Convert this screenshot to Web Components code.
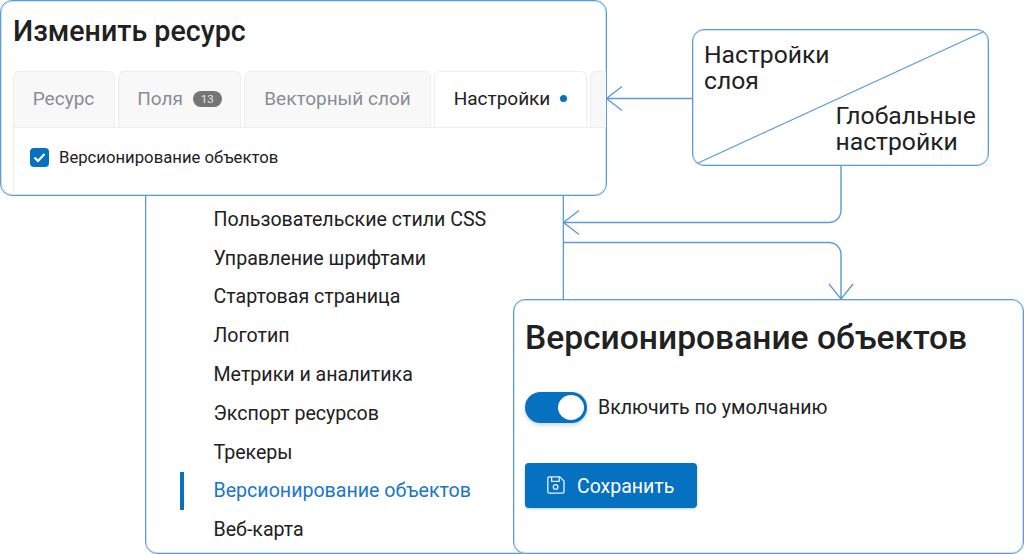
<!DOCTYPE html>
<html lang="ru">
<head>
<meta charset="utf-8">
<title>Версионирование объектов</title>
<style>
html, body { margin: 0; background: #fff; }
body { font-family: Roboto, "Liberation Sans", sans-serif; color: #212121; }
</style>
</head>
<body>
<settings-diagram>
  <nav-window style="left:145px;top:150px;width:419px;height:404px">
    <nav-item>Пользовательские стили CSS</nav-item>
    <nav-item>Управление шрифтами</nav-item>
    <nav-item>Стартовая страница</nav-item>
    <nav-item>Логотип</nav-item>
    <nav-item>Метрики и аналитика</nav-item>
    <nav-item>Экспорт ресурсов</nav-item>
    <nav-item>Трекеры</nav-item>
    <nav-item active>Версионирование объектов</nav-item>
    <nav-item>Веб-карта</nav-item>
  </nav-window>
  <diagram-links></diagram-links>
  <scope-box style="left:692px;top:29px;width:297px;height:137px"></scope-box>
  <resource-card style="left:0;top:0;width:607px;height:196px"></resource-card>
  <versioning-card style="left:513px;top:299px;width:511px;height:255px"></versioning-card>
</settings-diagram>

<script>
const LINE = "#5b9bd8";
const HALO = "inset 0 0 0 1px rgba(91,155,216,.3)";
const BLUE = "#0670c1";

class SettingsDiagram extends HTMLElement {
  constructor() {
    super();
    this.attachShadow({ mode: "open" });
    this.shadowRoot.innerHTML = `
<style>
:host { display: block; position: relative; width: 1024px; height: 554px; overflow: hidden; }
</style>
<slot></slot>`;
  }
}

class NavWindow extends HTMLElement {
  constructor() {
    super();
    this.attachShadow({ mode: "open" });
    this.shadowRoot.innerHTML = `
<style>
:host {
  display: flex; flex-direction: column; position: absolute; box-sizing: border-box;
  padding-top: 49px; background: #fff;
  border: 1px solid ${LINE}; border-radius: 12px; box-shadow: ${HALO};
}
</style>
<slot></slot>`;
  }
}

class NavItem extends HTMLElement {
  constructor() {
    super();
    this.attachShadow({ mode: "open" });
    this.shadowRoot.innerHTML = `
<style>
:host {
  display: flex; align-items: center; height: 38.8px; flex: none;
  margin-left: 34px; padding-left: 29.5px;
  border-left: 4px solid transparent;
  font-size: 19.6px; color: #212121;
}
:host([active]) { border-left-color: ${BLUE}; color: #1976c9; }
</style>
<slot></slot>`;
  }
}

class DiagramLinks extends HTMLElement {
  constructor() {
    super();
    this.attachShadow({ mode: "open" });
    this.shadowRoot.innerHTML = `
<style>
:host { position: absolute; left: 0; top: 0; }
svg { display: block; }
path { fill: none; stroke: ${LINE}; stroke-width: 1.4; }
</style>
<svg width="1024" height="554" viewBox="0 0 1024 554">
  <path d="M692.5 98.5H606.5M622 86.5L606.5 98.5L622 110.5"/>
  <path d="M841 165V210.5a12 12 0 0 1 -12 12H563.5M579 210.5L563.5 222.5L579 234.5"/>
  <path d="M563.5 242.5H829a12 12 0 0 1 12 12V299M829 284L841 299L853 284"/>
</svg>`;
  }
}

class ScopeBox extends HTMLElement {
  constructor() {
    super();
    this.attachShadow({ mode: "open" });
    this.shadowRoot.innerHTML = `
<style>
:host {
  display: flex; flex-direction: column; justify-content: space-between; position: absolute;
  box-sizing: border-box; padding: 12px 11px 10px 11px; background: #fff;
  border: 1px solid ${LINE}; border-radius: 12px; box-shadow: ${HALO};
  font-size: 24.7px; line-height: 26px; color: #212121;
}
svg { position: absolute; left: 0; top: 0; }
line { stroke: ${LINE}; stroke-width: 1.2; }
.right { align-self: flex-start; margin-left: 131.5px; }
</style>
<svg width="295" height="135" viewBox="0 0 295 135"><line x1="4" y1="133.5" x2="291" y2="1.5"/></svg>
<div>Настройки<br>слоя</div>
<div class="right">Глобальные<br>настройки</div>`;
  }
}

class TabItem extends HTMLElement {
  constructor() {
    super();
    this.attachShadow({ mode: "open" });
    this.shadowRoot.innerHTML = `
<style>
:host {
  display: flex; align-items: center; justify-content: center; gap: 10px; box-sizing: border-box;
  flex: none; height: 57px; padding-bottom: 2px; margin-bottom: -1px;
  background: #f8f8f8; border: 1px solid #eeeeee; border-radius: 6px 6px 0 0;
  font-size: 19px; color: #868e96;
}
:host([active]) { background: #fff; border-bottom-color: #fff; color: #212121; }
</style>
<slot></slot>`;
  }
}

class ResourceCard extends HTMLElement {
  constructor() {
    super();
    this.attachShadow({ mode: "open" });
    this.shadowRoot.innerHTML = `
<style>
:host {
  display: flex; flex-direction: column; position: absolute; box-sizing: border-box;
  padding-left: 12px; background: #fff; overflow: hidden;
  border: 1px solid ${LINE}; border-radius: 12px; box-shadow: ${HALO};
}
h1 { margin: 14px 0 0 0; height: 56px; font-size: 28.6px; line-height: 32px; font-weight: 500; color: #212121; }
.tabs { display: flex; gap: 3px; flex: none; }
.badge {
  display: inline-block; width: 29px; height: 16px; border-radius: 8px; background: #757575;
  color: #e4e4e4; font-size: 11.5px; line-height: 16px; text-align: center;
}
.dot { width: 7px; height: 7px; border-radius: 50%; background: ${BLUE}; }
.panel {
  flex: 1; display: flex; align-items: center; align-self: stretch; gap: 10px;
  padding: 0 0 9px 16px; border: 1px solid #eeeeee; border-width: 1px 0 0 1px;
}
.check { width: 19px; height: 19px; flex: none; border-radius: 4px; background: ${BLUE}; display: flex; align-items: center; justify-content: center; }
.label { font-size: 16.7px; color: #212121; }
</style>
<h1>Изменить ресурс</h1>
<div class="tabs">
  <tab-item style="width:102px;padding-right:1px">Ресурс</tab-item>
  <tab-item style="width:123px">Поля <span class="badge">13</span></tab-item>
  <tab-item style="width:187px">Векторный слой</tab-item>
  <tab-item active style="width:153px">Настройки <span class="dot"></span></tab-item>
  <tab-item style="width:40px"></tab-item>
</div>
<div class="panel">
  <span class="check"><svg width="13" height="11" viewBox="0 0 13 11"><path d="M1.5 5.5L5 9L11.5 2" fill="none" stroke="#fff" stroke-width="2.2"/></svg></span>
  <span class="label">Версионирование объектов</span>
</div>`;
  }
}

class ToggleSwitch extends HTMLElement {
  constructor() {
    super();
    this.attachShadow({ mode: "open" });
    this.shadowRoot.innerHTML = `
<style>
:host {
  display: flex; justify-content: flex-end; align-items: center; box-sizing: border-box;
  width: 62px; height: 31px; padding: 3px; flex: none;
  border-radius: 16px; background: ${BLUE}; box-shadow: 0 2px 4px rgba(6,112,193,.25);
}
span { width: 26px; height: 25px; border-radius: 50%; background: #fff; }
</style>
<span></span>`;
  }
}

class SaveButton extends HTMLElement {
  constructor() {
    super();
    this.attachShadow({ mode: "open" });
    this.shadowRoot.innerHTML = `
<style>
:host {
  display: inline-flex; align-items: center; gap: 12px; box-sizing: border-box;
  width: 172px; height: 45px; padding: 1px 0 0 22px;
  background: ${BLUE}; border-radius: 4px; box-shadow: 0 1px 3px rgba(6,112,193,.3);
  color: #fff; font-size: 19.5px;
}
svg { flex: none; margin-top: -3px; }
</style>
<svg width="18" height="18" viewBox="0 0 18 18" fill="none" stroke="#e8f1f9" stroke-width="1.3">
  <path d="M2.2 .9h10.6l4.2 4.2v10.6a1.4 1.4 0 0 1-1.4 1.4H2.2a1.4 1.4 0 0 1-1.4-1.4V2.3A1.4 1.4 0 0 1 2.2 .9z"/>
  <path d="M4.6 .9v4.4h7.6V.9"/>
  <circle cx="8.6" cy="11" r="2.3"/>
</svg>
<slot></slot>`;
  }
}

class VersioningCard extends HTMLElement {
  constructor() {
    super();
    this.attachShadow({ mode: "open" });
    this.shadowRoot.innerHTML = `
<style>
:host {
  display: flex; flex-direction: column; align-items: flex-start; position: absolute; box-sizing: border-box;
  padding: 20px 11px 0 11px; background: #fff;
  border: 1px solid ${LINE}; border-radius: 12px; box-shadow: ${HALO};
}
h2 { margin: 0 0 36px 0; font-size: 33.6px; line-height: 36px; font-weight: 500; color: #212121; }
.row { display: flex; align-items: center; gap: 11px; margin-bottom: 40px; font-size: 19.5px; color: #212121; }
</style>
<h2>Версионирование объектов</h2>
<div class="row"><toggle-switch></toggle-switch><span>Включить по умолчанию</span></div>
<save-button>Сохранить</save-button>`;
  }
}

customElements.define("settings-diagram", SettingsDiagram);
customElements.define("nav-window", NavWindow);
customElements.define("nav-item", NavItem);
customElements.define("diagram-links", DiagramLinks);
customElements.define("scope-box", ScopeBox);
customElements.define("tab-item", TabItem);
customElements.define("resource-card", ResourceCard);
customElements.define("toggle-switch", ToggleSwitch);
customElements.define("save-button", SaveButton);
customElements.define("versioning-card", VersioningCard);
</script>
</body>
</html>
